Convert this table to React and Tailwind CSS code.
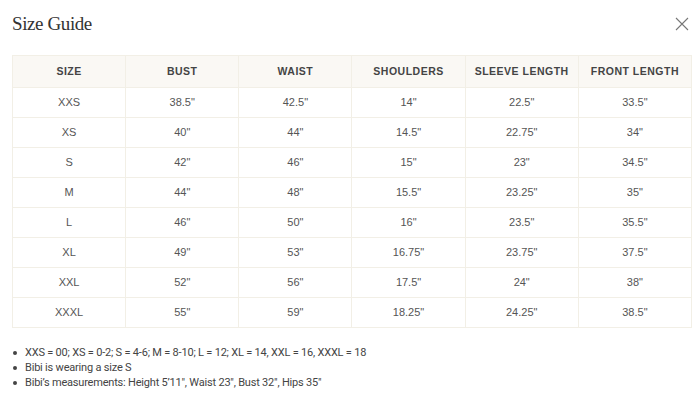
import React from "react";

const headers = ["Size", "Bust", "Waist", "Shoulders", "Sleeve Length", "Front Length"];

const rows = [
  ["XXS", "38.5\"", "42.5\"", "14\"", "22.5\"", "33.5\""],
  ["XS", "40\"", "44\"", "14.5\"", "22.75\"", "34\""],
  ["S", "42\"", "46\"", "15\"", "23\"", "34.5\""],
  ["M", "44\"", "48\"", "15.5\"", "23.25\"", "35\""],
  ["L", "46\"", "50\"", "16\"", "23.5\"", "35.5\""],
  ["XL", "49\"", "53\"", "16.75\"", "23.75\"", "37.5\""],
  ["XXL", "52\"", "56\"", "17.5\"", "24\"", "38\""],
  ["XXXL", "55\"", "59\"", "18.25\"", "24.25\"", "38.5\""],
];

const notes = [
  "XXS = 00; XS = 0-2; S = 4-6; M = 8-10; L = 12; XL = 14, XXL = 16, XXXL = 18",
  "Bibi is wearing a size S",
  "Bibi\u2019s measurements: Height 5\u201911\", Waist 23\", Bust 32\", Hips 35\"",
];

const App = () => {
  return (
    <div className="w-[700px] h-[420px] bg-white px-3 pt-2 overflow-hidden">
      {/* Header */}
      <div className="flex items-center justify-between h-[32px]">
        <h2 className="text-[19px] text-[#333] font-['Liberation_Serif',serif] tracking-[-0.4px]">
          Size Guide
        </h2>
        <button className="w-[16px] h-[16px] mr-[-2px] text-[#777]">
          <svg viewBox="0 0 16 16" className="w-full h-full" fill="none" stroke="currentColor" strokeWidth="1.1">
            <path d="M2 2L14 14M14 2L2 14" />
          </svg>
        </button>
      </div>

      {/* Table */}
      <table className="mt-[15px] w-[680px] table-fixed border-collapse font-['Liberation_Sans',Arial,sans-serif]">
        <thead>
          <tr className="bg-[#faf8f4] h-[32px]">
            {headers.map((h) => (
              <th
                key={h}
                className="border border-[#f2efe6] text-[10.5px] font-bold uppercase tracking-[0.5px] text-[#444]"
              >
                {h}
              </th>
            ))}
          </tr>
        </thead>
        <tbody>
          {rows.map((row) => (
            <tr key={row[0]} className="h-[30px]">
              {row.map((cell, i) => (
                <td
                  key={i}
                  className="border border-[#f2efe6] text-center text-[11px] text-[#555]"
                >
                  {cell}
                </td>
              ))}
            </tr>
          ))}
        </tbody>
      </table>

      {/* Notes */}
      <ul className="mt-[17px] font-['Roboto',sans-serif] text-[11px] tracking-[-0.2px] text-[#444] leading-[15px]">
        {notes.map((n) => (
          <li key={n} className="flex items-center gap-[8px] pl-[1px]">
            <span className="w-[4px] h-[4px] rounded-full bg-[#444] shrink-0"></span>
            <span>{n}</span>
          </li>
        ))}
      </ul>
    </div>
  );
};

export default App;
